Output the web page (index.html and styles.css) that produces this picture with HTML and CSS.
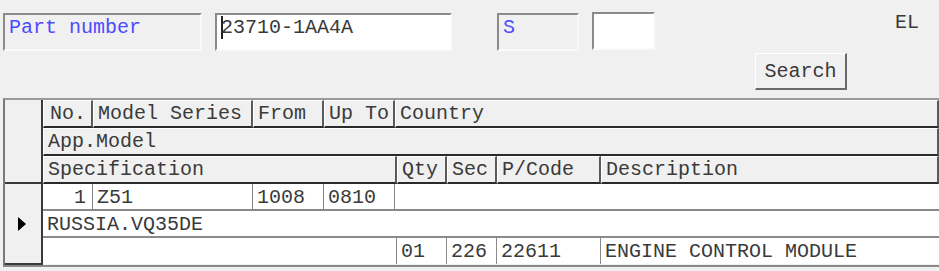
FILE: index.html
```html
<!DOCTYPE html>
<html lang="en">
<head>
    <meta charset="UTF-8">
    <meta name="viewport" content="width=device-width, initial-scale=1.0">
    <title>Part search</title>
    <link rel="stylesheet" href="styles.css">
</head>
<body>
    <!-- Search fields -->
    <div class="toolbar">
        <div class="field-label label-part">Part number</div>
        <div class="field-input input-part"><span class="caret"></span>23710-1AA4A</div>
        <div class="field-label label-s">S</div>
        <div class="field-input input-s"></div>
        <div class="region">EL</div>
    </div>

    <div class="actions">
        <button type="button" class="btn-search">Search</button>
    </div>

    <!-- Result grid -->
    <div class="grid">
        <div class="section">
            <div class="indicator head"></div>
            <div class="rows">
                <div class="row">
                    <div class="cell head c-no">No.</div>
                    <div class="cell head c-series">Model Series</div>
                    <div class="cell head c-from">From</div>
                    <div class="cell head c-upto">Up To</div>
                    <div class="cell head c-fill">Country</div>
                </div>
                <div class="row">
                    <div class="cell head c-fill">App.Model</div>
                </div>
                <div class="row">
                    <div class="cell head c-spec">Specification</div>
                    <div class="cell head c-qty">Qty</div>
                    <div class="cell head c-sec">Sec</div>
                    <div class="cell head c-pcode">P/Code</div>
                    <div class="cell head c-fill">Description</div>
                </div>
            </div>
        </div>

        <div class="section">
            <div class="indicator">
                <svg width="8" height="14" viewBox="0 0 8 14"><polygon points="0,0 8,7 0,14" fill="#000"/></svg>
            </div>
            <div class="rows">
                <div class="row data">
                    <div class="cell c-no num">1</div>
                    <div class="cell c-series">Z51</div>
                    <div class="cell c-from">1008</div>
                    <div class="cell c-upto">0810</div>
                    <div class="cell c-fill"></div>
                </div>
                <div class="row data">
                    <div class="cell c-fill">RUSSIA.VQ35DE</div>
                </div>
                <div class="row data">
                    <div class="cell c-spec"></div>
                    <div class="cell c-qty">01</div>
                    <div class="cell c-sec">226</div>
                    <div class="cell c-pcode">22611</div>
                    <div class="cell c-fill">ENGINE CONTROL MODULE</div>
                </div>
            </div>
        </div>
    </div>
</body>
</html>
```

FILE: styles.css
```css
body {
    margin: 0;
    background: #f0f0f0;
    font-family: "Liberation Mono", "Courier New", monospace;
    font-size: 20px;
    color: #3a3a3a;
    overflow: hidden;
}

/* top fields */
.toolbar {
    display: flex;
    align-items: flex-start;
    padding: 13px 0 0 3px;
}
.field-label,
.field-input {
    box-sizing: border-box;
    height: 38px;
    line-height: 24px;
    padding: 1px 4px 0;
    border-top: 2px solid #8a8a8a;
    border-left: 2px solid #8a8a8a;
    border-right: 2px solid #fafafa;
    border-bottom: 2px solid #fafafa;
    white-space: nowrap;
}
.field-label {
    color: #4b4bff;
    background: #f0f0f0;
}
.field-input {
    background: #fff;
}
.label-part {
    width: 199px;
}
.input-part {
    width: 237px;
    margin-left: 13px;
}
.caret {
    display: inline-block;
    width: 2px;
    height: 23px;
    margin-right: -2px;
    vertical-align: top;
    background: #222;
}
.label-s {
    width: 82px;
    margin-left: 45px;
}
.input-s {
    width: 63px;
    margin-left: 13px;
    margin-top: -1px;
}
.region {
    margin-left: auto;
    padding-right: 20px;
    line-height: 20px;
}

.actions {
    display: flex;
    justify-content: flex-end;
    width: 847px;
    margin-top: 2px;
}
.btn-search {
    box-sizing: border-box;
    width: 92px;
    height: 37px;
    padding: 0;
    font-family: inherit;
    font-size: 20px;
    color: #3a3a3a;
    background: #f0f0f0;
    border-top: 1px solid #fff;
    border-left: 1px solid #fff;
    border-right: 2px solid #6a6a6a;
    border-bottom: 2px solid #6a6a6a;
}

/* grid */
.grid {
    margin: 8px 0 0 3px;
    border-top: 2px solid #9a9a9a;
    border-left: 2px solid #7a7a7a;
    border-bottom: 2px solid #8a8a8a;
}
.section {
    display: flex;
}
.indicator {
    box-sizing: border-box;
    width: 38px;
    flex-shrink: 0;
    background: #f0f0f0;
    border-right: 2px solid #3a3a3a;
    border-bottom: 2px solid #3a3a3a;
    display: flex;
    align-items: center;
    justify-content: center;
}
.indicator svg {
    margin-left: -3px;
}
.rows {
    flex: 1;
    display: flex;
    flex-direction: column;
}
.row {
    display: flex;
    height: 28px;
}
.row.data {
    height: 27px;
}
.section:last-child .row.data:last-child .cell {
    border-bottom: 0;
    height: 26px;
}
.cell {
    box-sizing: border-box;
    flex-shrink: 0;
    padding: 2px 4px 0;
    line-height: 24px;
    white-space: nowrap;
    overflow: hidden;
    background: #fff;
    border-right: 1px solid #8a8a8a;
    border-bottom: 2px solid #8a8a8a;
}
.cell.head {
    background: #f0f0f0;
    border-top: 1px solid #fff;
    border-left: 1px solid #fff;
    border-right: 2px solid #5a5a5a;
    border-bottom: 2px solid #2a2a2a;
    padding-top: 1px;
    line-height: 24px;
}
.cell.num {
    text-align: right;
    padding-right: 6px;
}
.c-no { width: 50px; }
.c-no.head { padding-left: 6px; }
.c-series { width: 160px; }
.c-from { width: 71px; }
.c-upto { width: 71px; }
.c-spec { width: 354px; }
.c-qty { width: 50px; }
.c-sec { width: 50px; }
.c-pcode { width: 104px; }
.c-fill {
    flex: 1;
    border-right: 0;
}
```
